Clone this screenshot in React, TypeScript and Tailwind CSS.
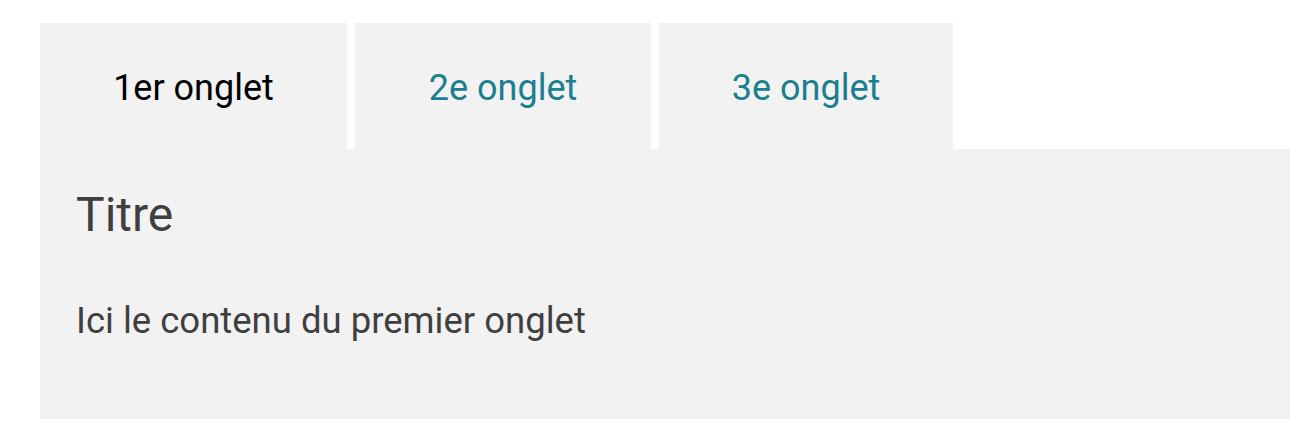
export default function App() {
  const font = { fontFamily: "Roboto, 'Liberation Sans', sans-serif" };
  return (
    <div className="bg-white w-[1290px] h-[440px] pt-[23px] pl-[40px]" style={font}>
      <div className="flex gap-2">
        <div className="w-[307px] h-[126px] bg-[#f2f2f2] flex items-center justify-center pt-[3px] text-[36px] leading-none text-black">
          1er onglet
        </div>
        <div className="w-[296px] h-[126px] bg-[#f2f2f2] flex items-center justify-center pt-[3px] text-[36px] leading-none text-[#1a7f8e]">
          2e onglet
        </div>
        <div className="w-[294px] h-[126px] bg-[#f2f2f2] flex items-center justify-center pt-[3px] text-[36px] leading-none text-[#1a7f8e]">
          3e onglet
        </div>
      </div>
      <div className="h-[270px] bg-[#f2f2f2] pl-[36px] pt-[42px] text-[#3f3f3f]">
        <h1 className="text-[48px] leading-none font-normal">Titre</h1>
        <p className="text-[36.5px] leading-none mt-[64px]">Ici le contenu du premier onglet</p>
      </div>
    </div>
  );
}
